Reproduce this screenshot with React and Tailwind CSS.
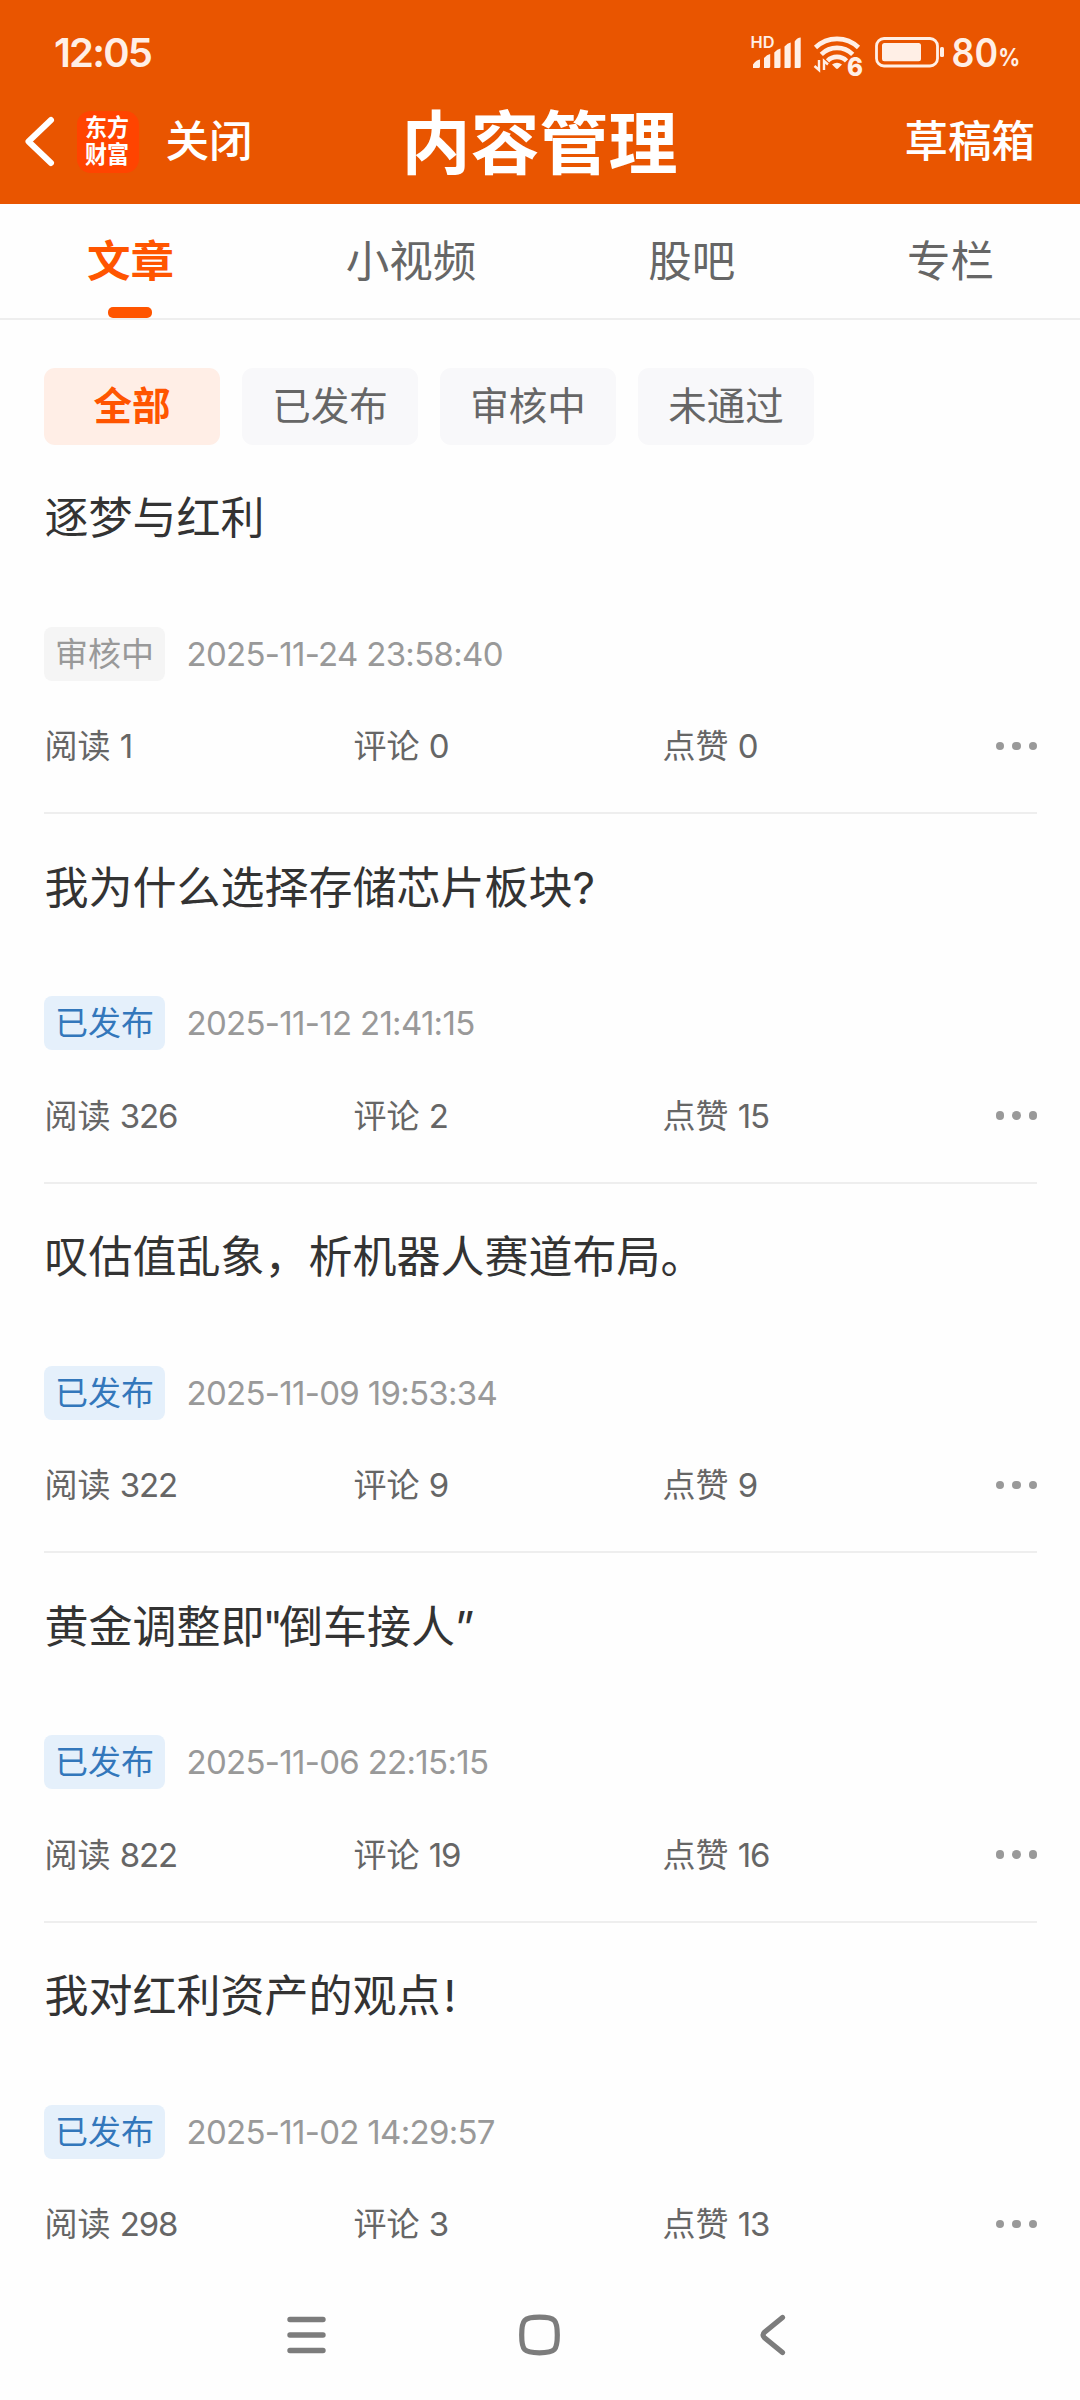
const tabs = ["文章", "小视频", "股吧", "专栏"];
const filters = ["全部", "已发布", "审核中", "未通过"];

const articles = [
  { title: "逐梦与红利", published: false, date: "2025-11-24 23:58:40", reads: 1, comments: 0, likes: 0 },
  { title: "我为什么选择存储芯片板块?", published: true, date: "2025-11-12 21:41:15", reads: 326, comments: 2, likes: 15 },
  { title: "叹估值乱象，析机器人赛道布局。", published: true, date: "2025-11-09 19:53:34", reads: 322, comments: 9, likes: 9 },
  { title: "黄金调整即\"倒车接人”", published: true, date: "2025-11-06 22:15:15", reads: 822, comments: 19, likes: 16 },
  { title: "我对红利资产的观点!", published: true, date: "2025-11-02 14:29:57", reads: 298, comments: 3, likes: 13 },
];

function StatusIcons() {
  return (
    <svg width="278" height="60" viewBox="748 24 278 60" fill="#ffefe6" className="block overflow-visible font-['Inter',sans-serif]">
      <text x="750.5" y="48.2" fontSize="16" fontWeight="600" textLength="24" lengthAdjust="spacingAndGlyphs">HD</text>
      <path d="M753 68v-3.500q3-4.500 7-5v7q0 1.500-1.500 1.500zM764 68v-10q3-3.500 6.200-4v12.500q0 1.500-1.500 1.500zM774.300 68v-15.500q3-3.500 6.200-4v18q0 1.500-1.500 1.500zM784.500 68v-21.500q3-3.500 6.200-4v24q0 1.500-1.500 1.500zM794.700 68v-26.500q2.500-4 6-4v29q0 1.500-1.500 1.500z" />
      <g fill="none" stroke="#ffefe6" strokeWidth="4.600">
        <path d="M815.500 47.500a31 31 0 0 1 43 0" />
        <path d="M821.300 54.300a22.500 22.500 0 0 1 31.400 0" />
        <path d="M827.500 60.800a13.500 13.500 0 0 1 19 0" />
      </g>
      <path d="M832 64.500q5-3.500 10 0l-4 4q-1 .8-2 0z" />
      <g fill="none" stroke="#ffefe6" strokeWidth="2.400">
        <path d="M819 60v10l-4.500-4M824 70v-9l4 3.500" />
      </g>
      <text x="847" y="75.700" fontSize="26" fontWeight="800" textLength="16" lengthAdjust="spacingAndGlyphs" stroke="#e95500" strokeWidth="2" paintOrder="stroke">6</text>
      <rect x="876.500" y="38.500" width="61" height="27.500" rx="7.500" fill="none" stroke="#ffefe6" strokeWidth="2.800" />
      <rect x="882" y="43" width="39" height="18.300" rx="2.500" />
      <rect x="940" y="47" width="4" height="10" rx="1.500" />
      <text x="951.500" y="66.500" fontSize="40" fontWeight="600" textLength="46.500" lengthAdjust="spacingAndGlyphs">80</text>
      <text x="998.300" y="66" fontSize="24" fontWeight="700" textLength="22" lengthAdjust="spacingAndGlyphs">%</text>
    </svg>
  );
}

function Header() {
  return (
    <header className="h-[204px] bg-[#e95500] text-white">
      <div className="flex h-[78px] items-start justify-between pl-[54px] pr-[54px]">
        <span className="mt-[28.500px] text-[40px] font-semibold leading-[48px] tracking-[-1.800px] text-[#ffefe6]">12:05</span>
        <div className="mt-[24px]"><StatusIcons /></div>
      </div>
      <div className="grid h-[126px] grid-cols-[1fr_280px_1fr] items-start pl-[22px] pr-[45px]">
        <div className="flex h-[126px] items-start">
          <svg width="36" height="56" viewBox="0 0 36 56" fill="none" className="mt-[35px]">
            <path d="M29 7 6.500 28.500 29 50" stroke="#fff" strokeWidth="6" strokeLinecap="round" strokeLinejoin="round" />
          </svg>
          <div className="ml-[18.500px] mt-[32.500px] h-[62.500px] w-[62px] rounded-[14px] bg-[#ff4400] pr-[1px] pt-[3px]">
            <div className="mt-[2.500px] flex scale-y-110 flex-col items-center text-[22px] font-bold leading-[24.500px]">
              <span>东方</span>
              <span>财富</span>
            </div>
          </div>
          <span className="ml-[27px] mt-[33px] whitespace-nowrap text-[43.500px] font-medium leading-[60px]">关闭</span>
        </div>
        <h1 className="ml-[13px] mt-[25.500px] whitespace-nowrap text-center text-[69px] font-bold leading-[80px]">内容管理</h1>
        <span className="mt-[33px] whitespace-nowrap text-right text-[43.500px] font-medium leading-[60px]">草稿箱</span>
      </div>
    </header>
  );
}

function Tabs() {
  return (
    <nav className="flex h-[116px] justify-around border-b-2 border-[#eeeeee] pl-[1px] text-[43.500px] leading-[60px] text-[#666666]">
      {tabs.map((t, i) => (
        <div key={t} className={i === 0 ? "flex flex-col items-center pt-[27px] font-bold text-[#ff5500]" : "flex flex-col items-center pt-[27px]"}>
          <span>{t}</span>
          {i === 0 && <i className="mt-[16px] h-[11px] w-[44px] rounded-[5px] bg-[#ff5500]" />}
        </div>
      ))}
    </nav>
  );
}

function Title({ text }) {
  return text.split(/(["!])/).map((part, i) => {
    if (part === '"') return <span key={i} className="ml-[-2px] tracking-[-4px]">{part}</span>;
    if (part === "!") return <span key={i} className="ml-[3px]">{part}</span>;
    return part;
  });
}

function Stat({ label, value }) {
  return (
    <span className="w-[309px]">
      {label} <span className="tracking-[-1.200px]">{value}</span>
    </span>
  );
}

function Article({ item }) {
  return (
    <article className="ml-[44px] mr-[43px] h-[369.500px] border-b-2 border-[#eeeeee] last:border-transparent">
      <h2 className="pl-[0.500px] pt-[43.500px] text-[44px] leading-[60px] text-[#333333]"><Title text={item.title} /></h2>
      <div className="mt-[78.500px] flex h-[54px] items-center">
        <span className={item.published
          ? "h-[54px] w-[121px] rounded-[8px] bg-[#e5f0fb] text-center text-[33px] leading-[54px] text-[#3377bb]"
          : "h-[54px] w-[121px] rounded-[8px] bg-[#f5f5f5] text-center text-[33px] leading-[54px] text-[#999999]"}>
          {item.published ? "已发布" : "审核中"}
        </span>
        <time className="ml-[21.500px] whitespace-pre text-[33px] leading-[54px] tracking-[-0.700px] text-[#999999]">{item.date}</time>
      </div>
      <div className="mt-[37.500px] flex h-[56px] items-center pl-[0.500px] text-[33px] leading-[56px] text-[#666666]">
        <Stat label="阅读" value={item.reads} />
        <Stat label="评论" value={item.comments} />
        <Stat label="点赞" value={item.likes} />
        <div className="ml-auto flex gap-[8px]">
          <i className="h-[8.500px] w-[8.500px] rounded-full bg-[#999999]" />
          <i className="h-[8.500px] w-[8.500px] rounded-full bg-[#999999]" />
          <i className="h-[8.500px] w-[8.500px] rounded-full bg-[#999999]" />
        </div>
      </div>
    </article>
  );
}

function SystemNav() {
  return (
    <footer className="flex h-[108px] items-center pl-[280px]">
      <svg width="52" height="52" viewBox="0 0 52 52" stroke="#7c7c7c" strokeWidth="5.400" strokeLinecap="round" className="mt-[-25px]">
        <path d="M10 11.500h33M10 27h33M10 42.500h33" />
      </svg>
      <svg width="52" height="52" viewBox="0 0 52 52" fill="none" stroke="#7c7c7c" strokeWidth="5.200" className="ml-[181px] mt-[-25px]">
        <path d="M8.700 27c0-15 2-17.800 17.800-17.800s17.800 2.800 17.800 17.800-2 17.800-17.800 17.800S8.700 42 8.700 27z" />
      </svg>
      <svg width="52" height="52" viewBox="0 0 52 52" fill="none" stroke="#7c7c7c" strokeWidth="5.200" strokeLinecap="round" className="ml-[181px] mt-[-25px]">
        <path d="M36.500 9.500 18.500 24.300q-3 2.700 0 5.400L36.500 44.500" />
      </svg>
    </footer>
  );
}

export default function App() {
  return (
    <div className="h-[2400px] w-[1080px] overflow-hidden bg-[#fefefe] font-['Inter','Noto_Sans_CJK_SC',sans-serif]" lang="zh-CN">
      <Header />
      <Tabs />
      <div className="flex h-[124.500px] gap-[22px] pl-[44px] pt-[48px] text-[38.500px] leading-[77px]">
        {filters.map((f, i) => (
          <button key={f} className={i === 0
            ? "h-[77px] w-[176px] rounded-[11px] bg-[#ffeee6] text-center font-bold text-[#ff5500]"
            : "h-[77px] w-[176px] rounded-[11px] bg-[#f8f8fa] text-center text-[#666666]"}>{f}</button>
        ))}
      </div>
      <main>
        {articles.map((a) => <Article key={a.date} item={a} />)}
      </main>
      <SystemNav />
    </div>
  );
}
